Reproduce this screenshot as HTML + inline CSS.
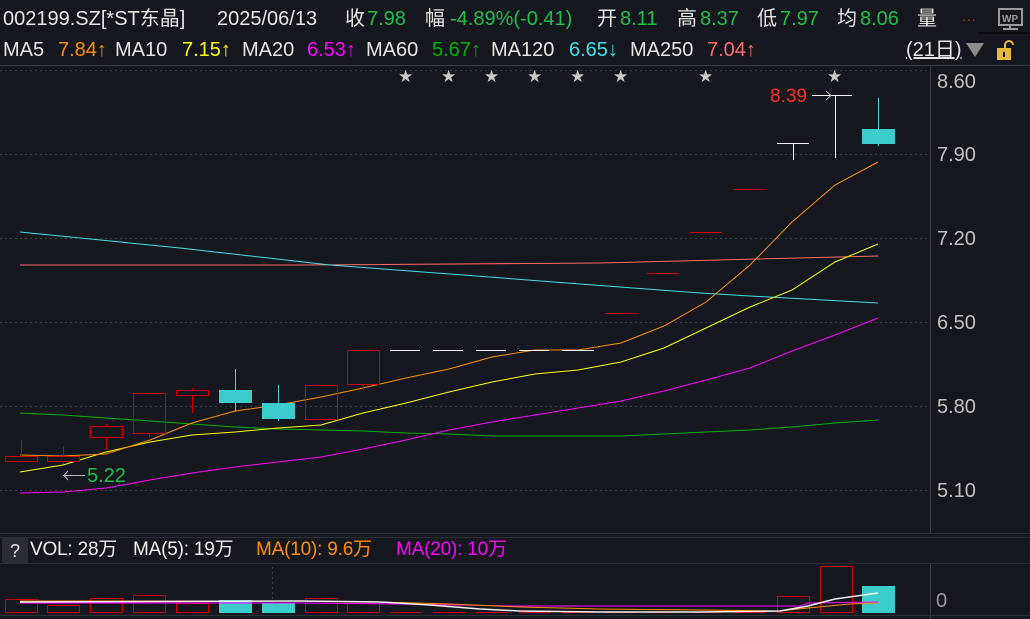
<!DOCTYPE html>
<html><head><meta charset="utf-8"><style>
body{margin:0;width:1030px;height:619px;background:#14171d;overflow:hidden;font-family:"Liberation Sans","Noto Sans CJK SC",sans-serif;}
.t{position:absolute;white-space:nowrap;color:#e6e6e6;font-size:20px;line-height:24px;}
.g{color:#1fbf4a}
.v{position:absolute;white-space:nowrap;font-size:19px;line-height:22px;top:539px;letter-spacing:-0.2px;}
</style></head><body>
<div class="t" style="left:3px;top:7px;">002199.SZ[*ST东晶]</div>
<div class="t" style="left:217px;top:7px;">2025/06/13</div>
<div class="t" style="left:345px;top:7px;">收</div><div class="t g" style="left:367px;top:7px;">7.98</div>
<div class="t" style="left:425px;top:7px;">幅</div><div class="t g" style="left:450px;top:7px;">-4.89%(-0.41)</div>
<div class="t" style="left:597px;top:7px;">开</div><div class="t g" style="left:620px;top:7px;">8.11</div>
<div class="t" style="left:677px;top:7px;">高</div><div class="t g" style="left:700px;top:7px;">8.37</div>
<div class="t" style="left:757px;top:7px;">低</div><div class="t g" style="left:780px;top:7px;">7.97</div>
<div class="t" style="left:837px;top:7px;">均</div><div class="t g" style="left:860px;top:7px;">8.06</div>
<div class="t" style="left:917px;top:7px;">量</div>
<div class="t" style="left:962px;top:4px;color:#e02020;font-size:14px;letter-spacing:1px">...</div>
<div class="t" style="left:3px;top:38px;">MA5</div><div class="t" style="left:58px;top:38px;color:#ff8c00">7.84↑</div>
<div class="t" style="left:115px;top:38px;">MA10</div><div class="t" style="left:182px;top:38px;color:#ffff00">7.15↑</div>
<div class="t" style="left:242px;top:38px;">MA20</div><div class="t" style="left:307px;top:38px;color:#ff00ff">6.53↑</div>
<div class="t" style="left:366px;top:38px;">MA60</div><div class="t" style="left:432px;top:38px;color:#00b000">5.67↑</div>
<div class="t" style="left:491px;top:38px;">MA120</div><div class="t" style="left:569px;top:38px;color:#40e0e8">6.65↓</div>
<div class="t" style="left:630px;top:38px;">MA250</div><div class="t" style="left:707px;top:38px;color:#ff6a6a">7.04↑</div>
<div class="t" style="left:906px;top:38px;text-decoration:underline;">(21日)</div>
<svg width="1030" height="619" style="position:absolute;left:0;top:0" xmlns="http://www.w3.org/2000/svg">
<g fill="none" stroke-width="1">
<rect x="999" y="9" width="23" height="16" stroke="#9a9a9a" stroke-width="2" fill="#14171d"/>
<text x="1002" y="22" font-size="10" font-weight="bold" fill="#9a9a9a" font-family="Liberation Sans">WP</text>
<path d="M1010 25v4M1003 29h15" stroke="#9a9a9a" stroke-width="2"/>
<path d="M977 33h53" stroke="#000"/>
<polygon points="966,43 984,43 975,57" fill="#8c8c8c"/>
<rect x="997" y="48" width="14" height="12" fill="#e8b838"/>
<rect x="1003" y="52" width="2" height="5" fill="#000"/>
<path d="M1005 48v-3a4 4 0 0 1 8 0" stroke="#e8b838" stroke-width="2"/>
<path d="M0 65.5h1030" stroke="#3a3d44"/>
<path d="M930.5 65v468M930.5 563v56" stroke="#3a3d44"/>
<g stroke="#3c3f46" stroke-dasharray="2 3">
<path d="M0 70.5h930M0 154.5h930M0 238.5h930M0 322.5h930M0 406.5h930M0 490.5h930"/>
<path d="M272.5 567v46"/>
</g>
<path d="M0 533.5h1030M0 537.5h1030M0 563.5h1030M0 615.5h1030" stroke="#2c2f36"/>
<polyline stroke="#ff6a6a" points="20,265 300,265 600,263 878,256"/>
<polyline stroke="#40e0e8" points="20,232 180,248 330,265 450,274 580,284 700,293 750,296 878,303"/>
<polyline stroke="#00b000" points="20,413 63,415 106,418 150,421 192,424 235,427 278,429 321,430 363,431 406,433 449,434 492,436 535,436 578,436 621,436 664,434 706,432 750,430 792,427 835,423 878,420"/>
<polyline stroke="#ff00ff" points="20,493 63,492 106,488 150,480 192,473 235,467 278,462 321,457 363,449 406,440 449,430 492,422 535,415 578,408 621,401 664,391 706,380 750,368 792,351 835,335 878,318"/>
<polyline stroke="#ffff00" points="20,472 63,465 106,452 150,442 192,435 235,432 278,428 321,425 363,413 406,403 449,392 492,382 535,374 578,370 621,362 664,348 706,328 750,307 792,290 835,262 878,244"/>
<polyline stroke="#ff8c00" points="20,455 63,456 106,454 150,440 192,423 235,411 278,405 321,397 363,388 406,378 449,369 492,357 535,350 578,350 621,343 664,326 706,302 750,265 792,222 835,185 878,162"/>
<g stroke="#d00000">
<path d="M21.5 440v23M63.5 446v18M106.5 424v26M149.5 433v4M192.5 388v25M363.5 384v6"/>
<rect x="5.5" y="456.5" width="32" height="5" fill="#14171d"/>
<rect x="47.5" y="456.5" width="32" height="5" fill="#14171d"/>
<rect x="90.5" y="426.5" width="32" height="11" fill="#14171d"/>
<rect x="133.5" y="393.5" width="32" height="40"/>
<rect x="176.5" y="390.5" width="32" height="5" fill="#14171d"/>
<rect x="305.5" y="385.5" width="32" height="34"/>
<rect x="347.5" y="350.5" width="32" height="34"/>
<path d="M605 313.5h32M647 273.5h32M690 232.5h32M733 189.5h32"/>
</g>
<g stroke="#40d0d0"><path d="M235.5 369v43M278.5 385v36M878.5 98v48"/></g>
<rect x="219" y="390" width="33" height="13" fill="#3ccccc"/>
<rect x="262" y="403" width="33" height="16" fill="#3ccccc"/>
<rect x="862" y="129" width="33" height="15" fill="#3ccccc"/>
<g stroke="#f0f0f0">
<path d="M390 350.5h30M433 350.5h30M476 350.5h30M519 350.5h30M562 350.5h32"/>
<path d="M777 143.5h32M793.5 143v17M812 95.5h40M835.5 95v63"/>
<path d="M826 91l5 4.5-5 4.5" stroke="#bbb"/>
<path d="M63 475.5h22M68 471l-4 4.5 4 4.5" stroke="#bbb"/>
</g>
<g stroke="#d00000">
<rect x="5.5" y="599.5" width="32" height="13"/><rect x="47.5" y="605.5" width="32" height="7"/>
<rect x="90.5" y="598.5" width="32" height="14"/><rect x="133.5" y="595.5" width="32" height="17"/>
<rect x="176.5" y="603.5" width="32" height="9"/><rect x="305.5" y="598.5" width="32" height="14"/>
<rect x="347.5" y="603.5" width="32" height="9"/>
<path d="M390 612.5h32M433 612.5h32M476 612.5h32M519 612.5h32M562 612.5h32M605 612.5h32M647 612.5h32M690 612.5h32M733 612.5h32"/>
<rect x="777.5" y="596.5" width="32" height="16"/><rect x="820.5" y="566.5" width="32" height="46"/>
</g>
<rect x="219" y="600" width="33" height="13" fill="#3ccccc"/>
<rect x="262" y="603" width="33" height="10" fill="#3ccccc"/>
<rect x="862" y="586" width="33" height="27" fill="#3ccccc"/>
<polyline stroke="#ff00ff" points="20,603 300,603 400,604 520,606 700,606 800,606 808,603 878,602"/>
<polyline stroke="#ff8c00" points="20,601 300,601 380,602 450,604 520,607 600,609 700,610 780,611 808,608 850,604 878,603"/>
<polyline stroke="#f0f0f0" stroke-width="1.5" points="20,602 300,601 380,602 430,605 480,609 520,611 600,612 700,612 780,611 808,606 835,599 878,593"/>
</g>
<g fill="#c8c8c8" font-size="17" font-family="DejaVu Sans">
<text x="398" y="82">★</text><text x="441" y="82">★</text><text x="484" y="82">★</text><text x="527" y="82">★</text><text x="570" y="82">★</text><text x="613" y="82">★</text><text x="698" y="82">★</text><text x="827" y="82">★</text>
</g>
<g fill="#c0c0c0" font-size="20" font-family="Liberation Sans">
<text x="937" y="88">8.60</text><text x="937" y="161">7.90</text><text x="937" y="245">7.20</text><text x="937" y="329">6.50</text><text x="937" y="413">5.80</text><text x="937" y="497">5.10</text>
<text x="936" y="607" fill="#999">0</text>
</g>
<text x="770" y="102" fill="#ff2a2a" font-size="19" font-family="Liberation Sans">8.39</text>
<text x="87" y="482" fill="#1fbf4a" font-size="20" font-family="Liberation Sans">5.22</text>
<rect x="2" y="537" width="26" height="26" rx="2" fill="#2a2d34"/>
<text x="10" y="557" fill="#e6e6e6" font-size="18" font-family="Liberation Sans">?</text>
</svg>
<div class="v" style="left:30px;color:#f0f0f0">VOL: 28万</div>
<div class="v" style="left:133px;color:#f0f0f0">MA(5): 19万</div>
<div class="v" style="left:256px;color:#ff8c00">MA(10): 9.6万</div>
<div class="v" style="left:396px;color:#ff00ff">MA(20): 10万</div>
</body></html>
